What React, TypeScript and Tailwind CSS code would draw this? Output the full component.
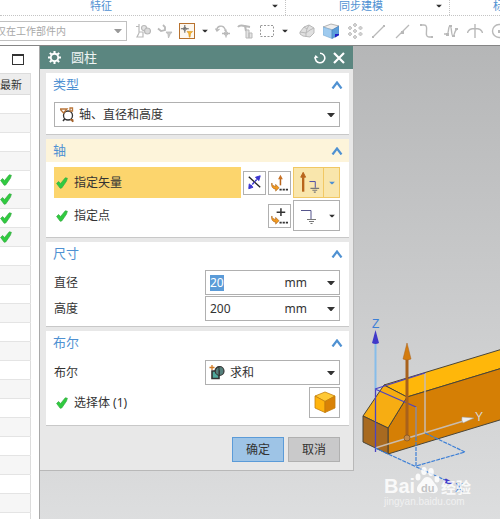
import type { ReactNode } from "react";

const Caret = ({ className = "" }: { className?: string }) => (
  <svg className={`h-1 w-2 ${className}`} viewBox="0 0 8 4" fill="currentColor" aria-hidden="true">
    <path d="M0 0h8L4.5 4h-1z" />
  </svg>
);

const Check = () => (
  <svg className="h-3 w-3 shrink-0" viewBox="0 0 12 12" aria-hidden="true">
    <path
      d="M.6 6.400 2.600 4.500l2 2L9.300.8l2.100.5-1 3-4.600 6.600-1.600.4L.6 6.400z"
      fill="#2fcb3f"
      stroke="#3aa945"
      strokeWidth="0.7"
    />
  </svg>
);

const ToolButton = ({
  label,
  active = false,
  children,
}: {
  label: string;
  active?: boolean;
  children: ReactNode;
}) => (
  <button
    type="button"
    aria-label={label}
    className={`h-4 w-4 shrink-0 text-[#b9b9b9] ${active ? "border border-[#b8722e] bg-[#fdf8f0]" : ""}`}
  >
    <svg className="h-full w-full" viewBox="0 0 16 16" fill="none" stroke="currentColor">
      {children}
    </svg>
  </button>
);

const CaretButton = ({ label }: { label: string }) => (
  <button type="button" aria-label={label} className="flex h-4 w-2 shrink-0 items-center justify-center text-[#333]">
    <Caret className="scale-75" />
  </button>
);

const Section = ({
  title,
  active = false,
  children,
}: {
  title: string;
  active?: boolean;
  children: ReactNode;
}) => (
  <section className="border-b border-[#c8c8c8] bg-white">
    <h2>
      <button
        type="button"
        className={`flex h-[23px] w-full items-center justify-between pr-[6px] pl-[7px] text-[13px] leading-none text-[#4f91d2] ${
          active ? "bg-[#fdf4da]" : ""
        }`}
      >
        {title}
        <svg className="h-2 w-3" viewBox="0 0 12 8" fill="none" stroke="#4f91d2" strokeWidth="2.2" aria-hidden="true">
          <path d="M1.5 7.5 6 1.5l4.5 6" />
        </svg>
      </button>
    </h2>
    <div className="pr-[9px] pl-2">{children}</div>
  </section>
);

const SizeRow = ({ id, label, value, selected = false }: { id: string; label: string; value: string; selected?: boolean }) => (
  <div className="flex items-center justify-between">
    <label htmlFor={id}>{label}</label>
    <div className="flex h-[25px] w-[135px] items-center border border-[#b0b0b0] bg-white px-1">
      <input
        id={id}
        defaultValue={value}
        size={value.length}
        className={`h-4 leading-4 outline-none ${selected ? "w-[14px] bg-[#5b9bd8] text-white" : "w-[60px]"}`}
      />
      <span className="mr-5 ml-auto">mm</span>
      <button type="button" aria-label={`${label}选项`} className="flex h-4 w-2 items-center text-[#333]">
        <Caret />
      </button>
    </div>
  </div>
);

const rows = Array.from({ length: 23 }, (_, i) => ({ id: i, checked: i >= 4 && i <= 7 }));

const Ribbon = () => (
  <div className="flex h-4 overflow-hidden border-b border-dotted border-[#c4c4c4] text-[11px] leading-3 whitespace-nowrap text-[#4f91d2]">
    <div className="flex w-[286px] shrink-0 items-center border-r border-dotted border-[#c4c4c4] pr-[6px] pb-[3px] pl-[90px]">
      <span>特征</span>
      <Caret className="ml-auto scale-75 text-[#333]" />
    </div>
    <div className="flex w-[164px] shrink-0 items-center border-r border-dotted border-[#c4c4c4] pr-[6px] pb-[3px] pl-[53px]">
      <span>同步建模</span>
      <Caret className="ml-auto scale-75 text-[#333]" />
    </div>
    <span className="pl-[43px]">标准</span>
  </div>
);

const Toolbar = () => (
  <div className="flex h-[30px] items-center overflow-hidden border-b border-[#858585]">
    <div className="relative -ml-1 w-[131px] shrink-0">
      <select
        aria-label="选择范围"
        className="block h-5 w-full appearance-none border border-l-0 border-[#c0c0c0] bg-white text-[10px] text-[#a8a8a8]"
      >
        <option>仅在工作部件内</option>
      </select>
      <Caret className="pointer-events-none absolute top-2 right-[5px] text-[#999]" />
    </div>

    <div className="ml-2 flex items-center gap-[6px]">
      <ToolButton label="装配">
        <path d="M1 3.500h3M4 1v9M4 10l-2 4h6V9H4" strokeWidth="1.200" />
        <circle cx="9" cy="5" r="2.500" strokeWidth="1.200" fill="#e4e4e4" />
        <circle cx="12.500" cy="8" r="3" strokeWidth="1.200" fill="#dadada" />
      </ToolButton>
      <ToolButton label="选择过滤器">
        <path d="M1 5.500 4 8l4-1V4L6 2" strokeWidth="1.800" />
        <path d="M9 9h6l-2 2.500-1.500 3.500-.5-3.500z" fill="#c8c8c8" strokeWidth="0.8" />
      </ToolButton>
      <ToolButton label="点过滤器" active>
        <path d="M5.500 1v9M1 5.500h9" stroke="#666" strokeWidth="1.200" />
        <circle cx="5.500" cy="5.500" r="1.800" stroke="#777" />
        <path d="M8 8.500h6.500L12 11l-.5 4h-1l-.5-4z" fill="#f7b52e" stroke="#d18b17" strokeWidth="0.600" />
      </ToolButton>
      <CaretButton label="更多过滤器" />
      <ToolButton label="旋转">
        <path d="M2 8c-1-5 6-7 8-2v2M.500 5.500 2 8l2.500-2M11 6.500v8M7 10.500h8" strokeWidth="1.300" />
        <circle cx="11" cy="10.500" r="1.800" />
      </ToolButton>
      <ToolButton label="重新附着">
        <path d="M1 4c2-3 5-1 7-1l5 1M8 3l1 5" strokeWidth="2" />
        <path d="M9 7h3v8H9zM12 10h3v5h-3z" fill="#e4e4e4" />
      </ToolButton>
      <ToolButton label="矩形选择">
        <path d="M1.5 2.5h13v11h-13z" strokeDasharray="2 1.5" stroke="#999" />
      </ToolButton>
      <CaretButton label="更多选择方式" />
    </div>

    <div className="ml-[10px] flex items-center gap-2">
      <ToolButton label="着色">
        <path d="m1 9 4-5 5-2 5 3v5l-4 4-7-1-3-2z" fill="#e0e0e0" />
        <path d="m1 9 6 1 4-3 4-2M7 10v4M5 4l3 2-1 4M10 2 8 6" />
      </ToolButton>
      <ToolButton label="视图方位">
        <path d="M0 4 8 1l8 2-6 4z" fill="#eee" stroke="#888" strokeWidth="0.600" />
        <path d="m0 4 9 3v8.500L0 12z" fill="#9fcbef" stroke="#7aa9d2" strokeWidth="0.600" />
        <path d="m9 7 7-4v9l-7 3.500z" fill="#5b9edb" stroke="#4a7fb8" strokeWidth="0.600" />
        <path d="M12 11h4v1l-4 2.500z" fill="#2420c8" stroke="none" />
      </ToolButton>
      <ToolButton label="阵列">
        <path
          d="M8 0l2 2-2 2-2-2zM8 6l2 2-2 2-2-2zM8 12l2 2-2 2-2-2zM13.500 3l2 2-2 2-2-2zM13.500 9l2 2-2 2-2-2zM3 9l2 2-2 2-2-2zM3 3l2 2-2 2-2-2z"
          fill="#d0d0d0"
          strokeWidth="0.700"
        />
      </ToolButton>
      <ToolButton label="直线">
        <path d="M2 14 13 3" strokeWidth="1.200" />
        <path d="M12 2h2v2h-2zM1 13h2v2H1z" fill="currentColor" stroke="none" />
      </ToolButton>
      <ToolButton label="中点">
        <path d="M1 15 14 2" strokeWidth="1.200" />
        <path d="M6 8h3v3H6z" fill="currentColor" stroke="none" />
      </ToolButton>
      <ToolButton label="曲线">
        <path d="M1 2h4c6 0-1 12 5 12h3" strokeWidth="1.400" />
        <path d="M1 1h2v2H1zM12 13h2v2h-2z" fill="currentColor" stroke="none" />
      </ToolButton>
      <ToolButton label="样条">
        <path d="M1 11h3c2 0 1-8 3-8s1 10 3 10 1-7 5-7" strokeWidth="1.400" />
        <path d="M3 10h3v3H3zM6 2h3v2H6zM9 12h3v2H9zM12 5h3v2h-3z" fill="currentColor" stroke="none" />
      </ToolButton>
      <ToolButton label="交点">
        <path d="M8 1v14M.500 10c1-6 14-6 15 0" strokeWidth="1.400" />
      </ToolButton>
      <ToolButton label="圆心">
        <circle cx="8" cy="8" r="6.500" strokeWidth="1.400" />
        <path d="M7 7h3v3H7z" fill="currentColor" stroke="none" />
      </ToolButton>
    </div>
  </div>
);

const Navigator = () => (
  <aside className="w-10 shrink-0 overflow-hidden border-r border-[#a9a9a9] bg-white">
    <div className="flex h-[27px] items-center pl-3">
      <button type="button" aria-label="最大化" className="h-[11px] w-3 border border-t-2 border-[#333]" />
    </div>
    <table className="w-[31px] table-fixed border-collapse border-r border-[#dcdcdc]">
      <thead>
        <tr className="h-[21px] border-y border-[#dcdcdc] bg-[#ededed]">
          <th className="p-0 text-left text-[11px] leading-none font-normal whitespace-nowrap">最新</th>
        </tr>
      </thead>
      <tbody>
        {rows.map((row) => (
          <tr key={row.id} className="h-[19px] border-b border-[#e4e4e4] odd:bg-white even:bg-[#f6f6f6]">
            <td className="p-0">{row.checked && <Check />}</td>
          </tr>
        ))}
      </tbody>
    </table>
  </aside>
);

const InferArrow = () => (
  <>
    <path d="M3 11.500c0 2.500 2 3.500 4 3.500v-2l3.500 3.500L7 20v-2.200C4 17.800 2 15 3 11.500z" fill="#f39a1e" stroke="#ad641a" strokeWidth="0.700" />
    <path d="M11 18.500h9" stroke="#333" strokeWidth="1.800" strokeDasharray="2.300 1" />
  </>
);

const CylinderDialog = () => (
  <div role="dialog" aria-label="圆柱" className="w-[314px] shrink-0 border-r border-b border-[#b8b8b8] bg-[#e8e8e8]">
    <header className="flex h-[23px] items-center bg-[#5b8680] pr-2 pl-2 text-white">
      <svg className="h-[13px] w-[13px]" viewBox="0 0 14 14" fill="none" stroke="currentColor" aria-hidden="true">
        <circle cx="7" cy="7" r="4" strokeWidth="2" />
        <path
          d="M7 0v2.5M7 11.500V14M0 7h2.500M11.500 7H14M2 2l1.800 1.800M10.200 10.200 12 12M12 2l-1.800 1.800M2 12l1.800-1.800"
          strokeWidth="2.200"
        />
      </svg>
      <h1 className="ml-[10px] text-[13px] leading-none text-[#eef4f3]">圆柱</h1>
      <button type="button" aria-label="重置" className="ml-auto h-3 w-3">
        <svg viewBox="0 0 12 12" fill="none" stroke="currentColor" strokeWidth="1.600">
          <path d="M6 1.200a4.800 4.800 0 1 1-4.700 4" />
          <path d="M0 6.500 1.500 3l3 2.500z" fill="currentColor" stroke="none" />
        </svg>
      </button>
      <button type="button" aria-label="关闭" className="ml-[7px] h-3 w-3">
        <svg viewBox="0 0 12 12" fill="none" stroke="currentColor" strokeWidth="2.200">
          <path d="m1 1 10 10M11 1 1 11" />
        </svg>
      </button>
    </header>

    <div className="space-y-1 pt-1 pr-1 pl-[6px]">
      <Section title="类型">
        <div className="relative mt-[6px] mb-[7px]">
          <select
            aria-label="类型"
            className="block h-[25px] w-full appearance-none border border-[#b0b0b0] bg-white pl-6 text-[12px]"
          >
            <option>轴、直径和高度</option>
          </select>
          <svg className="pointer-events-none absolute top-[5px] left-[6px] h-4 w-4" viewBox="0 0 16 16" fill="none" aria-hidden="true">
            <circle cx="8" cy="8.500" r="4.500" stroke="#333" strokeWidth="1.300" />
            <path d="M0 2h7L3.500 6zM10 4V1h2.500v3z" stroke="#b9763a" strokeWidth="1.300" />
            <path d="m3 14 2-2.500" stroke="#333" strokeWidth="1.500" />
            <path d="M10 12.500h3V15z" fill="#a3622c" stroke="#a3622c" />
          </svg>
          <Caret className="pointer-events-none absolute top-[11px] right-[5px] text-[#333]" />
        </div>
      </Section>

      <Section title="轴" active>
        <div className="flex items-center gap-[2px] pt-[5px]">
          <div className="flex h-[31px] flex-1 items-center gap-[6px] bg-[#fcd56d] pl-[2px]">
            <Check />
            指定矢量
          </div>
          <button type="button" aria-label="反向" className="h-6 w-[23px] border border-[#b0b0b0]">
            <svg viewBox="0 0 22 22" fill="none">
              <path d="m5 5 12 11" stroke="#222" strokeWidth="1.400" />
              <path d="m6 16 9-10" stroke="#3a34cf" strokeWidth="1.400" strokeDasharray="3 1" />
              <path d="m5 17.500.5-5 4 3.500zM17 4l-5 1.500 3.500 3.500z" fill="#3a34cf" stroke="#3a34cf" />
            </svg>
          </button>
          <button type="button" aria-label="矢量构造器" className="h-6 w-[23px] border border-[#b0b0b0]">
            <svg viewBox="0 0 22 22" fill="none">
              <path d="M12 14V6" stroke="#b8651c" strokeWidth="1.600" />
              <path d="m12 3-2.500 4.500h5z" fill="#c87124" />
              <InferArrow />
            </svg>
          </button>
          <button
            type="button"
            aria-label="自动判断的矢量"
            className="flex h-[31px] w-[47px] items-center border border-[#f1c864] bg-[#f9e6ac]"
          >
            <svg className="h-full w-[30px] border-r border-[#f1c864]" viewBox="0 0 30 29" fill="none">
              <path d="M9.500 24V9" stroke="#b8651c" strokeWidth="2.400" />
              <path d="m9.500 4-2.500 5h5z" fill="#b8651c" stroke="#b8651c" />
              <path d="M16 13.500h6V20" stroke="#4b4ba5" />
              <path d="M17 20.500h9M19 22.500h5M20.500 24.500h2" stroke="#777" strokeWidth="1.200" />
            </svg>
            <span className="flex flex-1 justify-center text-[#4f91d2]">
              <Caret className="scale-75" />
            </span>
          </button>
        </div>
        <div className="flex items-center gap-[2px] pt-[2px] pb-[6px]">
          <div className="flex h-[31px] flex-1 items-center gap-[6px] pl-[2px]">
            <Check />
            指定点
          </div>
          <button type="button" aria-label="点构造器" className="h-6 w-[23px] border border-[#b0b0b0]">
            <svg viewBox="0 0 22 22" fill="none">
              <path d="M12.500 3.500v8M8 7.500h9" stroke="#333" strokeWidth="1.600" />
              <InferArrow />
            </svg>
          </button>
          <button type="button" aria-label="自动判断的点" className="flex h-[31px] w-[47px] items-center border border-[#b0b0b0]">
            <svg className="h-full w-[30px]" viewBox="0 0 30 29" fill="none">
              <path d="M7 9.500h10V18" stroke="#55558c" />
              <path d="M13 18.500h9M15 20.500h5M16.500 22.500h2" stroke="#777" strokeWidth="1.200" />
            </svg>
            <span className="flex flex-1 justify-center text-[#333]">
              <Caret className="scale-75" />
            </span>
          </button>
        </div>
      </Section>

      <Section title="尺寸">
        <div className="space-y-[1px] pt-[5px] pb-[5px]">
          <SizeRow id="diameter" label="直径" value="20" selected />
          <SizeRow id="height" label="高度" value="200" />
        </div>
      </Section>

      <Section title="布尔">
        <div className="flex items-center justify-between pt-[6px]">
          <label htmlFor="boolean">布尔</label>
          <div className="relative w-[135px]">
            <select
              id="boolean"
              className="block h-[25px] w-full appearance-none border border-[#b0b0b0] bg-white pl-6 text-[12px]"
            >
              <option>求和</option>
            </select>
            <svg className="pointer-events-none absolute top-1 left-1 h-4 w-4" viewBox="0 0 16 16" fill="none" aria-hidden="true">
              <circle cx="10.500" cy="7" r="4.500" fill="#55807c" stroke="#333" strokeWidth="1.200" />
              <path d="M3 7h7v7.500H3z" fill="#4fa89c" stroke="#333" strokeWidth="1.600" />
              <path d="M10 3a4.500 4.500 0 0 0-3.500 6q1 2 3.500 2.500z" fill="#55807c" stroke="#333" />
              <path d="M3 1v5M.5 3.500h5" stroke="#d07a25" strokeWidth="1.300" />
            </svg>
            <Caret className="pointer-events-none absolute top-[11px] right-[5px] text-[#333]" />
          </div>
        </div>
        <div className="flex items-center gap-[6px] pt-[2px] pb-[7px] pl-[2px]">
          <Check />
          选择体 (1)
          <button type="button" aria-label="选择体" className="ml-auto h-[31px] w-[31px] border border-[#b0b0b0]">
            <svg viewBox="0 0 29 29" stroke="#c47f0c" strokeWidth="0.800">
              <path d="m5 8 10-4 10 4-10 5.500z" fill="#ffc936" />
              <path d="m5 8 10 5.500v11L5 20z" fill="#ffb40d" />
              <path d="m15 13.500 10-5.500v12l-10 4.500z" fill="#d98206" />
            </svg>
          </button>
        </div>
      </Section>
    </div>

    <footer className="flex justify-end gap-1 pt-[11px] pr-[13px] pb-2">
      <button type="button" className="h-[25px] w-[52px] border border-[#5b9bd8] bg-[#9ec4e6]">
        确定
      </button>
      <button type="button" className="h-[25px] w-[52px] border border-[#b0b0b0] bg-[#c9c9ca]">
        取消
      </button>
    </footer>
  </div>
);

const Model = () => (
  <svg
    className="mt-[254px] h-[219px] w-[146px] shrink-0 overflow-visible"
    viewBox="354 300 146 219"
    fill="none"
    fontFamily="Liberation Sans, sans-serif"
    role="img"
    aria-label="实体模型"
  >
    {/* solid body, runs on past the right edge of the view */}
    <g stroke="#4a4538" strokeWidth="1">
      <path d="M384 385 2500-258V-239L407 397z" fill="#ffb70a" />
      <path d="m388 428 19-31L2500-239V-188L388 454z" fill="#d57f05" />
      <path d="m363 416 21-31 23 12-19 31z" fill="#f7ad12" />
      <path d="m363 416 25 12v26l-25-12z" fill="#a86a20" />
    </g>

    {/* datum frame */}
    <path d="M425 373v60M375 448l92-28" stroke="#c9bcae" strokeWidth="1.500" />
    <path d="M375.500 344v46" stroke="#86bdea" strokeWidth="2" />
    <path d="m375 389 50-16M375 389l41 18M375.500 390v62" stroke="#4a43c4" strokeWidth="1.300" />
    <path d="M416 407v30" stroke="#8d8b9c" strokeWidth="1.500" />
    <path d="M416 437v29l49-14-40-19M375 448l70 32" stroke="#3c7fd6" strokeWidth="1.200" strokeDasharray="4 1" />
    <path d="m375.500 330-3.500 13q3.500 2 7 0z" fill="#4039c9" />
    <path d="m454 483-8-4.500q-3 1-1 4.500 4 2 9 0z" fill="#4039c9" />
    <path d="m474 418-12-1q-1 3 1 6z" fill="#eee" stroke="#999" strokeWidth="0.500" />

    {/* direction handle */}
    <path d="M407 358v78" stroke="#a8611b" strokeWidth="3" />
    <path d="m407 343-4 16q4 2 8 0z" fill="#d37c10" stroke="#a8611b" strokeWidth="0.500" />
    <circle cx="407" cy="438" r="3" fill="#c58a4a" stroke="#7d5223" strokeWidth="0.700" />

    <g fontSize="12">
      <text x="372" y="328" fill="#3c7fd6">Z</text>
      <text x="475" y="421" fill="#d8d8d8">Y</text>
      <text x="455" y="492" fill="#3c7fd6">X</text>
    </g>

    {/* watermark */}
    <g fill="#fff" fillOpacity="0.850">
      <text x="384" y="493" fontSize="20" fontWeight="bold">Bai</text>
      <ellipse cx="418" cy="477" rx="2.500" ry="3.500" />
      <ellipse cx="424" cy="471" rx="2.800" ry="4" />
      <ellipse cx="431" cy="472" rx="2.800" ry="4" />
      <ellipse cx="437" cy="479" rx="2.500" ry="3.500" />
      <path d="M427 477c5 0 6 5 9 8 4 5 1 9-4 8-3-1-6-1-9 0-6 1-8-4-4-9 3-2 4-7 8-7z" />
      <text x="441" y="493" fontSize="15" fontWeight="bold" fontFamily="Noto Sans CJK SC, sans-serif">经验</text>
      <text x="384" y="505" fontSize="10" fillOpacity="0.600">jingyan.baidu.com</text>
    </g>
    <text x="421" y="492" fontSize="11" fontWeight="bold" fill="#c2c3c4">du</text>
  </svg>
);

export default function App() {
  return (
    <div className="flex min-h-screen flex-col overflow-hidden bg-white font-['Noto_Sans','Noto_Sans_CJK_SC',sans-serif] text-[12px] leading-4 text-[#333]">
      <Ribbon />
      <Toolbar />
      <main className="flex flex-1">
        <Navigator />
        <div className="flex min-w-0 flex-1 items-start overflow-hidden bg-gradient-to-b from-[#b5b6b7] to-[#dedfe0]">
          <CylinderDialog />
          <Model />
        </div>
      </main>
    </div>
  );
}
